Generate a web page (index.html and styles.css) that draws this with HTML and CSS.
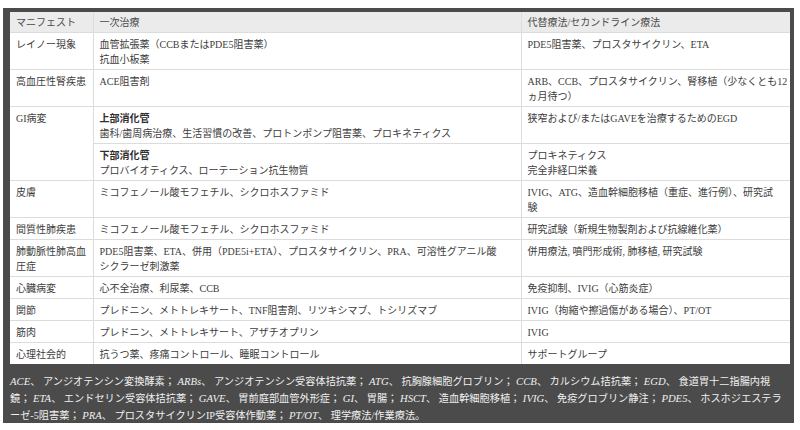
FILE: index.html
```html
<!DOCTYPE html>
<html lang="ja">
<head>
<meta charset="utf-8">
<link rel="stylesheet" href="styles.css">
</head>
<body>
<div class="frame">
  <table class="tbl">
    <colgroup><col class="c1"><col class="c2"><col class="c3"></colgroup>
    <thead>
      <tr><th>マニフェスト</th><th>一次治療</th><th>代替療法/セカンドライン療法</th></tr>
    </thead>
    <tbody>
      <tr><td>レイノー現象</td><td>血管拡張薬（CCBまたはPDE5阻害薬）<br>抗血小板薬</td><td>PDE5阻害薬、プロスタサイクリン、ETA</td></tr>
      <tr><td>高血圧性腎疾患</td><td>ACE阻害剤</td><td>ARB、CCB、プロスタサイクリン、腎移植（少なくとも12<br>ヵ月待つ）</td></tr>
      <tr><td rowspan="2">GI病変</td><td><b>上部消化管</b><br>歯科/歯周病治療、生活習慣の改善、プロトンポンプ阻害薬、プロキネティクス</td><td>狭窄および/またはGAVEを治療するためのEGD</td></tr>
      <tr><td><b>下部消化管</b><br>プロバイオティクス、ローテーション抗生物質</td><td>プロキネティクス<br>完全非経口栄養</td></tr>
      <tr><td>皮膚</td><td>ミコフェノール酸モフェチル、シクロホスファミド</td><td>IVIG、ATG、造血幹細胞移植（重症、進行例）、研究試<br>験</td></tr>
      <tr><td>間質性肺疾患</td><td>ミコフェノール酸モフェチル、シクロホスファミド</td><td>研究試験（新規生物製剤および抗線維化薬）</td></tr>
      <tr><td>肺動脈性肺高血圧症</td><td>PDE5阻害薬、ETA、併用（PDE5i+ETA）、プロスタサイクリン、PRA、可溶性グアニル酸<br>シクラーゼ刺激薬</td><td>併用療法, 噴門形成術, 肺移植, 研究試験</td></tr>
      <tr><td>心臓病変</td><td>心不全治療、利尿薬、CCB</td><td>免疫抑制、IVIG（心筋炎症）</td></tr>
      <tr><td>関節</td><td>プレドニン、メトトレキサート、TNF阻害剤、リツキシマブ、トシリズマブ</td><td>IVIG（拘縮や擦過傷がある場合）、PT/OT</td></tr>
      <tr><td>筋肉</td><td>プレドニン、メトトレキサート、アザチオプリン</td><td>IVIG</td></tr>
      <tr><td>心理社会的</td><td>抗うつ薬、疼痛コントロール、睡眠コントロール</td><td>サポートグループ</td></tr>
    </tbody>
  </table>
  <p class="note"><i>ACE</i>、 アンジオテンシン変換酵素； <i>ARBs</i>、 アンジオテンシン受容体拮抗薬； <i>ATG</i>、 抗胸腺細胞グロブリン； <i>CCB</i>、 カルシウム拮抗薬； <i>EGD</i>、 食道胃十二指腸内視<br>鏡； <i>ETA</i>、 エンドセリン受容体拮抗薬； <i>GAVE</i>、 胃前庭部血管外形症； <i>GI</i>、 胃腸； <i>HSCT</i>、 造血幹細胞移植； <i>IVIG</i>、 免疫グロブリン静注； <i>PDE5</i>、 ホスホジエステラ<br>ーゼ-5阻害薬； <i>PRA</i>、 プロスタサイクリンIP受容体作動薬； <i>PT/OT</i>、 理学療法/作業療法。</p>
</div>
</body>
</html>
```

FILE: styles.css
```css
html, body {
  margin: 0;
  padding: 0;
  background: #ffffff;
}

body {
  font-family: "Liberation Serif", "Noto Sans CJK JP", serif;
  font-size: 10px;
  color: #3d3d3d;
}

.frame {
  box-sizing: border-box;
  margin: 8px 0 0 3px;
  width: 791px;
  height: 415px;
  padding: 4px 4px 0 7px;
  background: #4b4b4b;
}

.tbl {
  width: 780px;
  border-collapse: collapse;
  table-layout: fixed;
  background: #ffffff;
}

.c1 { width: 83px; }
.c2 { width: 428px; }
.c3 { width: 269px; }

.tbl th,
.tbl td {
  text-align: left;
  vertical-align: top;
  line-height: 15px;
  padding: 4px 6px 2px 6px;
  border: 1px solid #dcdcdc;
  border-top: none;
  font-weight: normal;
  white-space: nowrap;
}

.tbl td:first-child {
  white-space: normal;
}

.tbl tr > :first-child { border-left: none; }
.tbl tr > :last-child {
  border-right: none;
  padding-right: 0;
}

.tbl tbody tr:last-child td { border-bottom: none; }

.tbl th {
  background: #ebebeb;
  color: #4a4a4a;
  padding: 3px 6px 2px 6px;
}

.tbl b {
  font-weight: bold;
  color: #2e2e2e;
}

.note {
  margin: 0;
  padding: 9px 0 0 0;
  color: #f0f0f0;
  font-size: 10.2px;
  line-height: 17px;
  width: 780px;
  white-space: nowrap;
}

.note i {
  font-style: italic;
  font-size: 10.7px;
}
```
